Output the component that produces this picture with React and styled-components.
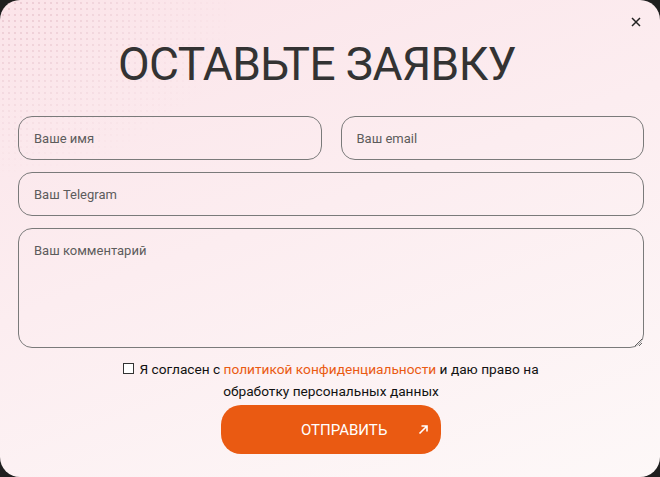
import React, { useState } from 'react';
import styled, { createGlobalStyle } from 'styled-components';

const Global = createGlobalStyle`
  html, body {
    margin: 0;
    padding: 0;
    background: #1f1f1f;
  }
  * {
    box-sizing: border-box;
  }
`;

const Modal = styled.div`
  position: relative;
  width: 660px;
  height: 477px;
  border-radius: 20px;
  overflow: hidden;
  background: linear-gradient(160deg, #fbe4e9 0%, #fcedf0 45%, #fdf8f8 100%);
  padding: 41px 16px 0 18px;
  font-family: Roboto, "Noto Sans", sans-serif;
  display: flex;
  flex-direction: column;
  align-items: center;

  &::before {
    content: '';
    position: absolute;
    left: 0;
    top: 0;
    width: 240px;
    height: 180px;
    background-image: radial-gradient(circle, rgba(205, 150, 165, 0.45) 0.6px, transparent 1px);
    background-size: 6px 6px;
    -webkit-mask-image: radial-gradient(ellipse at 0 0, #000 0%, transparent 70%);
    mask-image: radial-gradient(ellipse at 0 0, #000 0%, transparent 70%);
    pointer-events: none;
  }
`;

const Close = styled.button`
  position: absolute;
  top: 14px;
  right: 16px;
  width: 16px;
  height: 16px;
  padding: 0;
  border: none;
  background: none;
  cursor: pointer;
  display: flex;
  align-items: center;
  justify-content: center;
`;

const Title = styled.h2`
  position: relative;
  margin: 0 0 29px;
  padding-right: 28px;
  font-size: 46px;
  line-height: 1;
  font-weight: 400;
  letter-spacing: -0.6px;
  color: #333;
  text-transform: uppercase;
`;

const Form = styled.form`
  position: relative;
  width: 100%;
  display: flex;
  flex-direction: column;
  align-items: center;
`;

const Fields = styled.div`
  width: 100%;
  display: grid;
  grid-template-columns: 1fr 1fr;
  column-gap: 19px;
  row-gap: 12px;
`;

const Input = styled.input`
  grid-column: ${(p) => (p.$wide ? '1 / -1' : 'auto')};
  width: 100%;
  height: 44px;
  padding: 0 15px;
  border: 1px solid #7a7a7a;
  border-radius: 14px;
  background: transparent;
  font-family: inherit;
  font-size: 13px;
  color: #333;
  outline: none;

  &::placeholder {
    color: #5c5c5c;
  }
`;

const Textarea = styled.textarea`
  grid-column: 1 / -1;
  width: 100%;
  height: 120px;
  padding: 14px 15px;
  border: 1px solid #7a7a7a;
  border-radius: 14px;
  background: transparent;
  font-family: inherit;
  font-size: 13px;
  color: #333;
  outline: none;
  display: block;

  &::placeholder {
    color: #5c5c5c;
  }
`;

const Agree = styled.label`
  margin-top: 10px;
  max-width: 430px;
  text-align: center;
  font-size: 13.7px;
  line-height: 22px;
  color: #111;
  cursor: pointer;
`;

const Box = styled.span`
  display: inline-block;
  width: 11px;
  height: 11px;
  margin-right: 5px;
  border: 1px solid #333;
  background: ${(p) => (p.$on ? '#ea5a12' : '#fff')};
  vertical-align: 0;
`;

const Link = styled.a`
  color: #ea5a12;
  text-decoration: none;
`;

const Submit = styled.button`
  margin-top: 3px;
  width: 220px;
  height: 49px;
  border: none;
  border-radius: 20px;
  background: #ea5a12;
  color: #fff;
  font-family: inherit;
  font-size: 15px;
  text-transform: uppercase;
  display: flex;
  align-items: center;
  justify-content: space-between;
  padding: 0 12px 0 80px;
  cursor: pointer;
`;

export default function App() {
  const [agree, setAgree] = useState(false);

  return (
    <>
      <Global />
      <Modal>
        <Close aria-label="Закрыть">
          <svg width="10" height="10" viewBox="0 0 10 10">
            <path d="M1 1 L9 9 M9 1 L1 9" stroke="#222" strokeWidth="1.5" />
          </svg>
        </Close>
        <Title>Оставьте заявку</Title>
        <Form onSubmit={(e) => e.preventDefault()}>
          <Fields>
            <Input placeholder="Ваше имя" name="name" />
            <Input placeholder="Ваш email" name="email" type="email" />
            <Input $wide placeholder="Ваш Telegram" name="telegram" />
            <Textarea placeholder="Ваш комментарий" name="comment" />
          </Fields>
          <Agree onClick={() => setAgree(!agree)}>
            <Box $on={agree} />Я согласен с <Link href="#">политикой конфиденциальности</Link> и даю право на обработку персональных данных
          </Agree>
          <Submit type="submit">
            Отправить
            <svg width="11" height="11" viewBox="0 0 11 11">
              <path d="M1.5 9.5 L9 2 M3.5 2 H9 V7.5" stroke="#fff" strokeWidth="1.6" fill="none" />
            </svg>
          </Submit>
        </Form>
      </Modal>
    </>
  );
}
